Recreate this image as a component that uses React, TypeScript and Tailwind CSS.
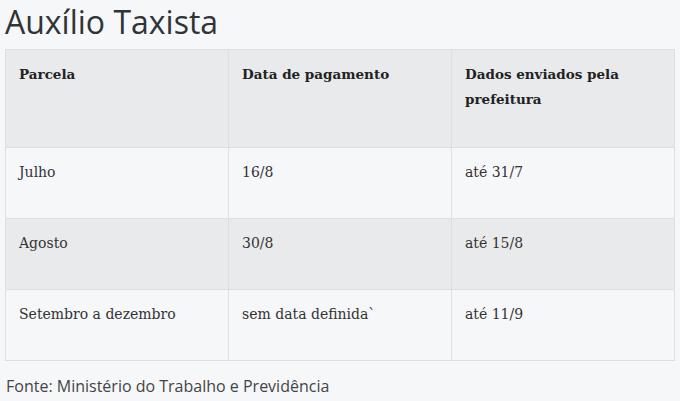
export default function App() {
  const rows = [
    ["Julho", "16/8", "até 31/7"],
    ["Agosto", "30/8", "até 15/8"],
    ["Setembro a dezembro", "sem data definida`", "até 11/9"],
  ];
  return (
    <div className="w-[680px] h-[401px] bg-[#f6f7f9] overflow-hidden">
      <h1 className="pl-[5px] pt-[2px] text-[32px] leading-[40px] text-[#2f3439] font-['Open_Sans',sans-serif]">
        Auxílio Taxista
      </h1>
      <div className="ml-[5px] mt-[7px] w-[670px] border border-[#dedfe1] font-['DejaVu_Serif',serif] text-[14px]">
        <div className="grid grid-cols-[222px_223px_1fr] h-[97px] bg-[#e9eaec] text-[#222] font-bold text-[13.5px] leading-[25px]">
          <div className="px-[13px] pt-[12px]">Parcela</div>
          <div className="px-[13px] pt-[12px] border-l border-[#dedfe1]">Data de pagamento</div>
          <div className="px-[13px] pt-[12px] border-l border-[#dedfe1]">Dados enviados pela<br />prefeitura</div>
        </div>
        {rows.map((r, i) => (
          <div
            key={i}
            className={`grid grid-cols-[222px_223px_1fr] h-[71px] border-t border-[#dedfe1] text-[#333] leading-[25px] ${i === 1 ? "bg-[#e9eaec]" : "bg-[#f6f7f9]"}`}
          >
            <div className="px-[13px] pt-[12px]">{r[0]}</div>
            <div className="px-[13px] pt-[12px] border-l border-[#dedfe1]">{r[1]}</div>
            <div className="px-[13px] pt-[12px] border-l border-[#dedfe1]">{r[2]}</div>
          </div>
        ))}
      </div>
      <p className="pl-[6px] mt-[14px] text-[16px] leading-[22px] text-[#444] font-['Open_Sans',sans-serif]">
        Fonte: Ministério do Trabalho e Previdência
      </p>
    </div>
  );
}
